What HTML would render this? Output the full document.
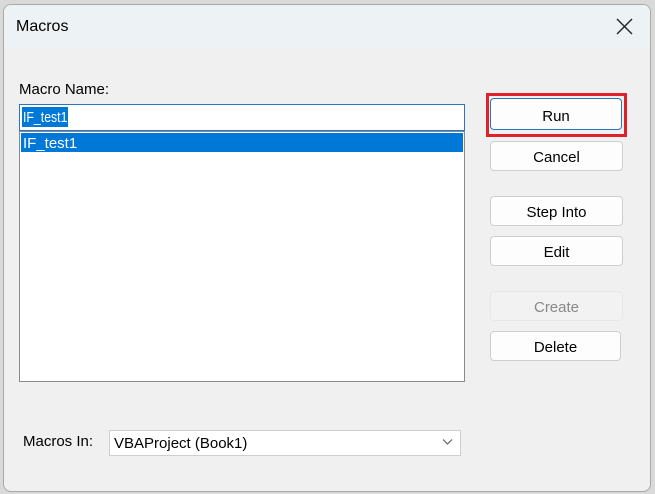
<!DOCTYPE html>
<html><head><style>
*{margin:0;padding:0;box-sizing:border-box}
body{width:655px;height:494px;background:#d9d9d9;font-family:"Liberation Sans",sans-serif;position:relative;overflow:hidden}
.win{position:absolute;left:3px;top:4px;width:648px;height:488px;background:#f0f0f0;border:1px solid #a8a8a8;border-radius:8px;overflow:hidden}
.title{position:absolute;left:0;top:0;width:100%;height:44px;background:#edf3f5}
.t{position:absolute;font-size:15px;color:#000}
.box{position:absolute;background:#fff}
.btn{position:absolute;left:490px;width:133px;height:30px;background:#fdfdfd;border:1px solid #cfcfcf;border-radius:4px;font-size:15px;text-align:center;line-height:31px;color:#000}
</style></head><body>
<div class="win"><div class="title"></div></div>
<div class="t" style="left:16px;top:18px;font-size:16px">Macros</div>
<svg style="position:absolute;left:616px;top:18px" width="17" height="17"><path d="M1 1L16 16M16 1L1 16" stroke="#222" stroke-width="1.4"/></svg>
<div class="t" style="left:19px;top:81px">Macro Name:</div>
<div class="box" style="left:19px;top:104px;width:446px;height:27px;border:1px solid #2b74c2"></div>
<div style="position:absolute;left:22px;top:107px;width:46px;height:20px;background:#0078d7"></div>
<div class="t" style="left:23px;top:109px;color:#fff;transform:scaleX(0.82);transform-origin:left">IF_test1</div>
<div class="box" style="left:19px;top:131px;width:446px;height:251px;border:1px solid #8a8a8a"></div>
<div style="position:absolute;left:21px;top:133px;width:442px;height:19px;background:#0078d7"></div>
<div class="t" style="left:23px;top:135px;color:#fff">IF_test1</div>
<div style="position:absolute;left:486px;top:93px;width:141px;height:44px;border:3px solid #e0202a"></div>
<div class="btn" style="top:98px;height:32px;line-height:35px;left:490px;width:132px;border-color:#2b74c2">Run</div>
<div class="btn" style="top:141px">Cancel</div>
<div class="btn" style="top:196px">Step Into</div>
<div class="btn" style="top:236px">Edit</div>
<div class="btn" style="top:291px;background:#f2f2f2;border-color:#e8e8e8;color:#888">Create</div>
<div class="btn" style="top:331px;width:131px">Delete</div>
<div class="t" style="left:23px;top:433px">Macros In:</div>
<div class="box" style="left:109px;top:430px;width:352px;height:26px;border:1px solid #cfcfcf"></div>
<div class="t" style="left:114px;top:435px">VBAProject (Book1)</div>
<svg style="position:absolute;left:442px;top:438px" width="11" height="8"><path d="M1 1.5L5.5 6L10 1.5" stroke="#555" fill="none" stroke-width="1"/></svg>
</body></html>
